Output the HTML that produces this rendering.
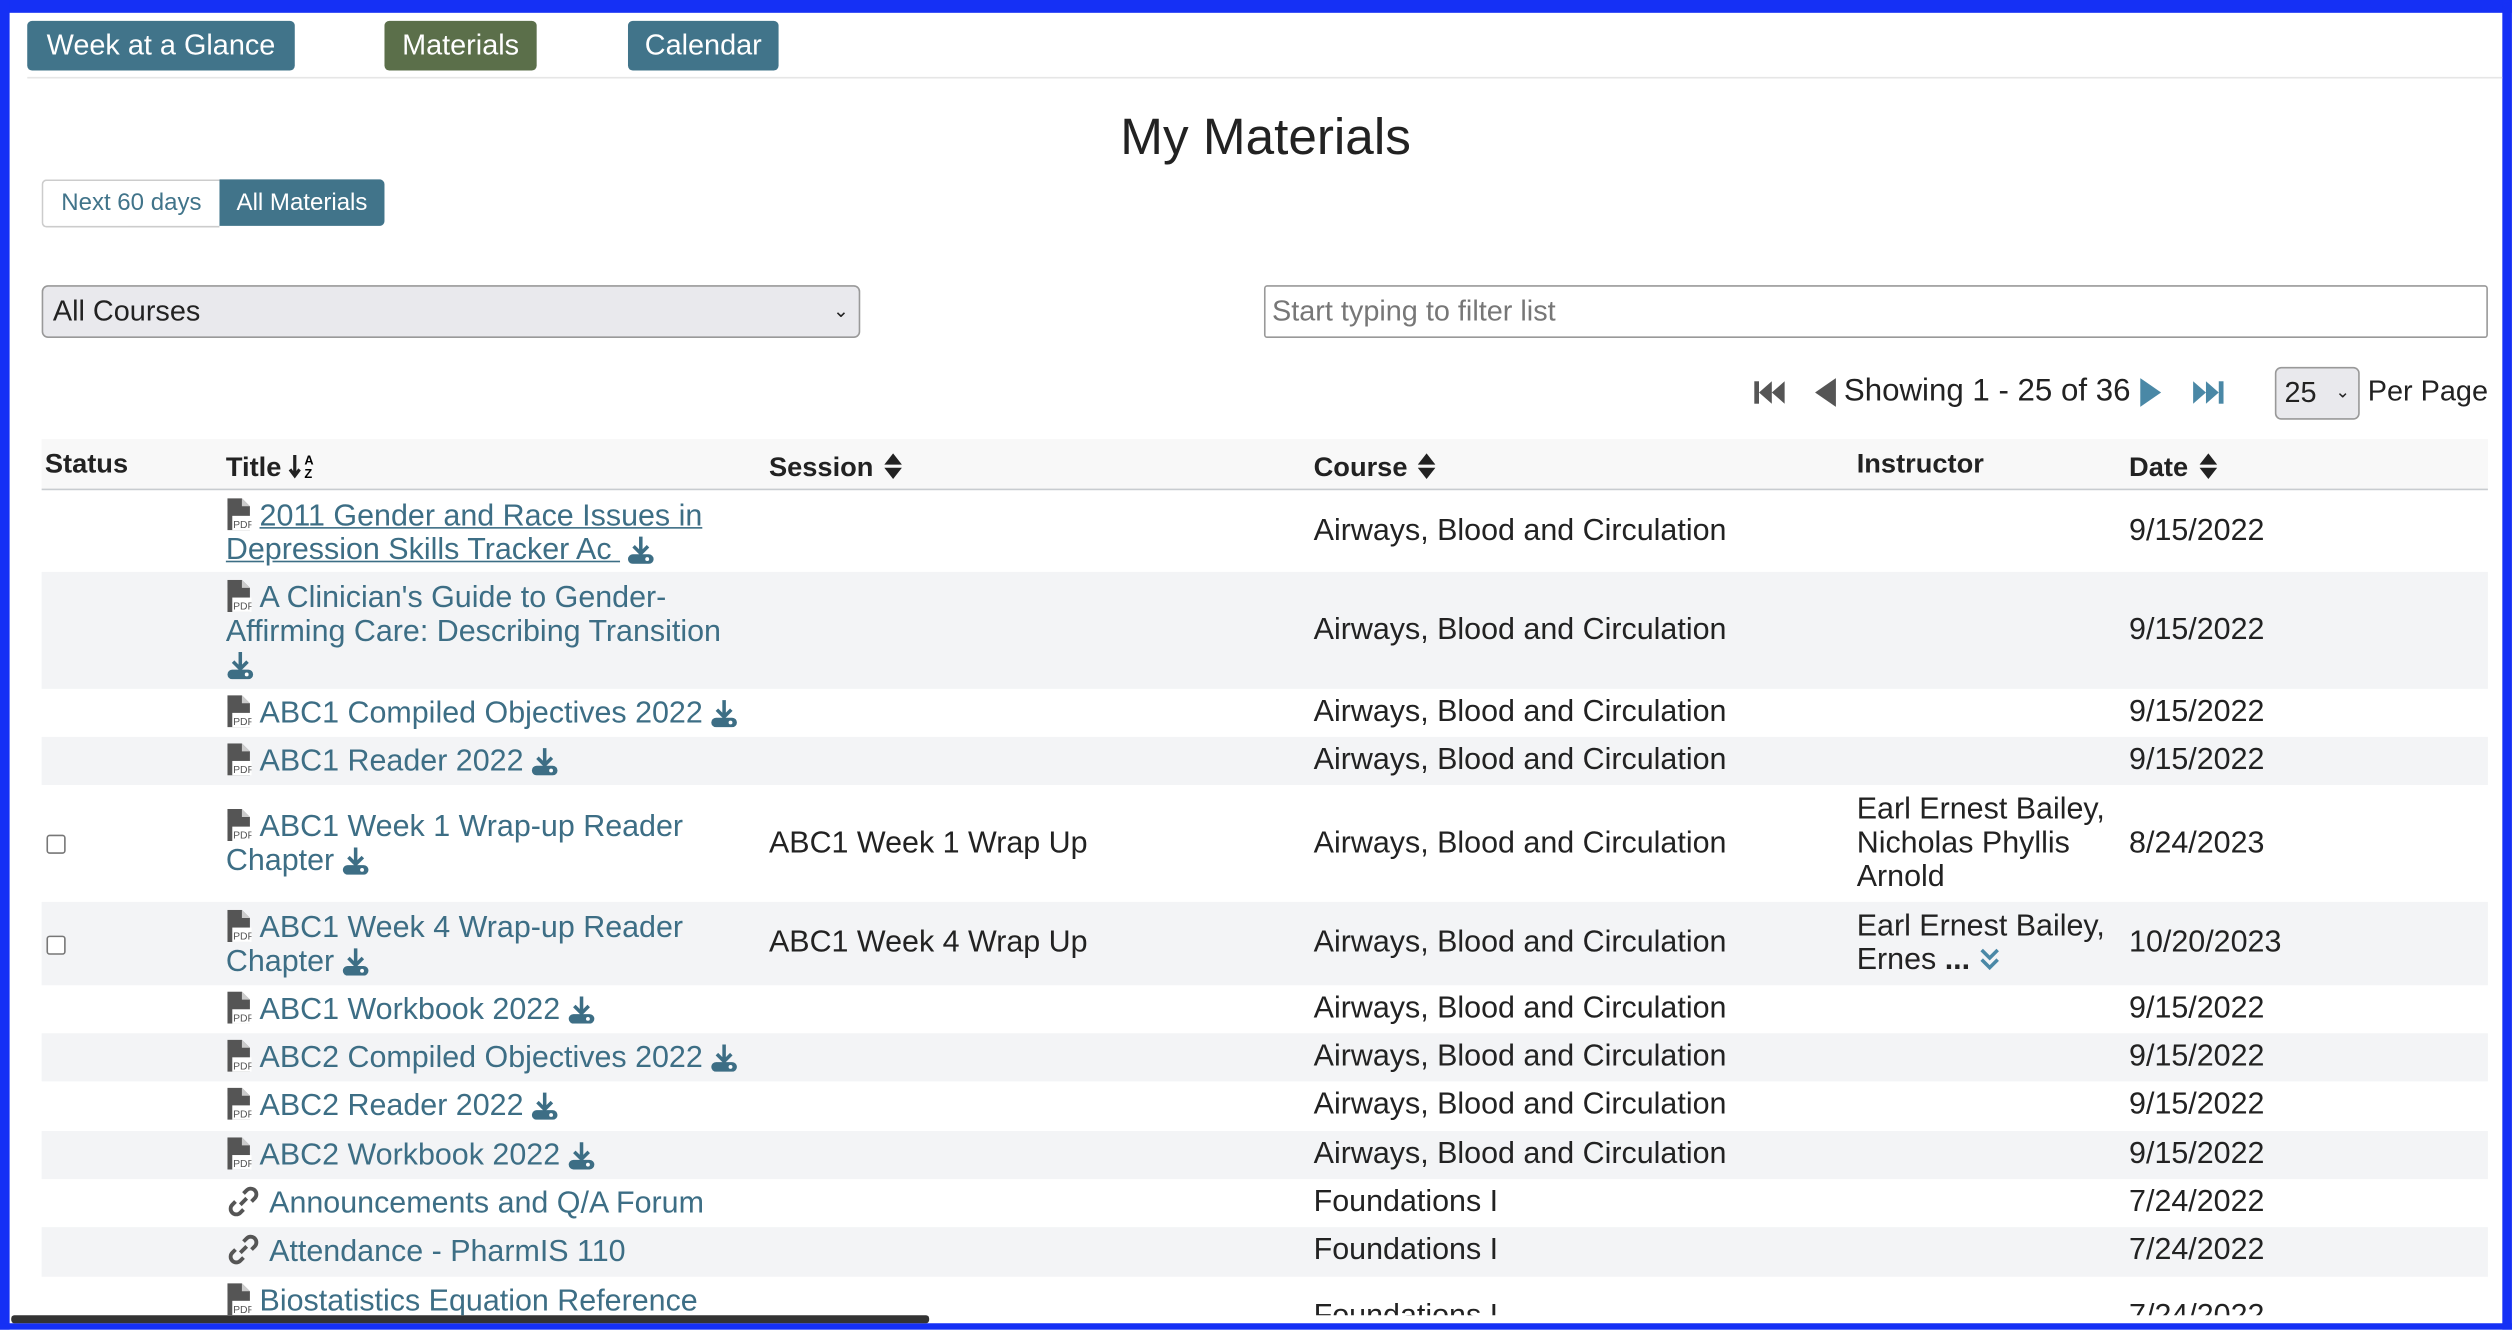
<!DOCTYPE html>
<html><head><meta charset="utf-8"><style>
html,body{margin:0;padding:0;width:2512px;height:1330px;overflow:hidden;background:#fff}
#w{position:absolute;left:0;top:0;width:1568px;height:830px;transform:scale(1.602);transform-origin:0 0;font-family:"Liberation Sans",sans-serif;color:#222;background:#fff}
.a{position:absolute}
.btn{position:absolute;top:13px;height:31px;border-radius:3px;color:#fff;font-size:18px;line-height:31px;text-align:center}
.c{color:#3d6e85}
.row{position:absolute;left:26px;width:1527px}
.sh{background:#f3f4f6}
.t{position:absolute;font-size:19px;line-height:21px;white-space:nowrap}
.pdf{display:inline-block;width:16px;height:20px;vertical-align:-3px;margin-right:5px}
.dl{display:inline-block;width:18px;height:18px;vertical-align:-3px;margin-left:4px}
.cb{position:absolute;left:3px;width:10px;height:10px;border:1.5px solid #777;border-radius:2px;background:#fff}
.hd{position:absolute;font-size:17px;font-weight:bold;top:8px}
.sort{display:inline-block;width:11px;height:16px;vertical-align:-2px;margin-left:2px}
</style></head><body><div id="w">
<svg width="0" height="0" style="position:absolute"><defs>
<symbol id="p" viewBox="0 0 16 20"><path d="M1 0h9l5 5v15H1z" fill="#555"/><path d="M10 0v5h5z" fill="#fff" opacity=".7"/><rect x="4" y="11" width="12" height="9" fill="#fff"/><text x="4.5" y="18.5" font-size="6.5" font-family="Liberation Sans" fill="#555">PDF</text></symbol>
<symbol id="d" viewBox="0 0 18 18"><path d="M9 1v10M4.5 7l4.5 4.5 4.5-4.5" stroke="#3d6e85" stroke-width="2.2" fill="none"/><rect x="1" y="12" width="16" height="6" rx="3" fill="#3d6e85"/><circle cx="13" cy="15" r="1.2" fill="#fff"/></symbol>
<symbol id="l" viewBox="0 0 20 20"><g fill="none" stroke="#555" stroke-width="2.4"><path d="M8 12l4-4"/><path d="M10 5l2-2a3.5 3.5 0 0 1 5 5l-2 2"/><path d="M10 15l-2 2a3.5 3.5 0 0 1-5-5l2-2"/></g></symbol>
<symbol id="s" viewBox="0 0 11 16"><path d="M5.5 0L11 7H0zM0 9h11l-5.5 7z" fill="#222"/></symbol>
</defs></svg>
<div class="a" style="left:0;top:0;width:1568px;height:8px;background:#1530f5"></div>
<div class="a" style="left:0;top:0;width:6px;height:830px;background:#1530f5"></div>
<div class="a" style="left:1562px;top:0;width:6px;height:830px;background:#1530f5"></div>
<div class="a" style="left:0;top:826px;width:1568px;height:4px;background:#1530f5"></div>
<div class="a" style="left:7px;top:821px;width:573px;height:5px;background:#333;border-radius:2px"></div>

<div class="btn" style="left:17px;width:167px;background:#41748a">Week at a Glance</div>
<div class="btn" style="left:240px;width:95px;background:#5b6f4a">Materials</div>
<div class="btn" style="left:392px;width:94px;background:#41748a">Calendar</div>
<div class="a" style="left:17px;top:48px;width:1545px;height:1px;background:#e6e6e6"></div>
<div class="a" style="left:0;width:1580px;top:66px;text-align:center;font-size:32px;line-height:38px">My Materials</div>

<div class="a" style="left:26px;top:112px;width:110px;height:28px;border:1px solid #ccc;border-right:none;border-radius:3px 0 0 3px;color:#41748a;font-size:15px;line-height:28px;text-align:center">Next 60 days</div>
<div class="a" style="left:137px;top:112px;width:103px;height:29px;background:#41748a;border-radius:0 3px 3px 0;color:#fff;font-size:15px;line-height:29px;text-align:center">All Materials</div>

<div class="a" style="left:26px;top:178px;width:509px;height:31px;background:#e9e9ed;border:1px solid #999;border-radius:4px;font-size:18px;line-height:31px"><span style="margin-left:6px">All Courses</span><span style="position:absolute;right:6px;top:0;font-size:12px">&#8964;</span></div>
<div class="a" style="left:789px;top:178px;width:762px;height:31px;border:1px solid #999;border-radius:2px;font-size:18px;line-height:31px;color:#777"><span style="margin-left:4px">Start typing to filter list</span></div>

<svg class="a" style="left:1095px;top:237px" width="20" height="16" viewBox="0 0 20 16"><rect x="0" y="1" width="3" height="14" fill="#555"/><path d="M11 1v14L3 8zM19 1v14L11 8z" fill="#555"/></svg>
<svg class="a" style="left:1131px;top:236px" width="16" height="18" viewBox="0 0 16 18"><path d="M15 0v18L2 9z" fill="#555"/></svg>
<div class="a t" style="left:1151px;top:234px;font-size:19.5px">Showing 1 - 25 of 36</div>
<svg class="a" style="left:1335px;top:236px" width="16" height="18" viewBox="0 0 16 18"><path d="M1 0v18l13-9z" fill="#4a88a6"/></svg>
<svg class="a" style="left:1368px;top:237px" width="20" height="16" viewBox="0 0 20 16"><path d="M1 1v14l8-7zM9 1v14l8-7z" fill="#4a88a6"/><rect x="17" y="1" width="3" height="14" fill="#4a88a6"/></svg>
<div class="a" style="left:1420px;top:229px;width:51px;height:31px;background:#e9e9ed;border:1px solid #999;border-radius:4px;font-size:18px;line-height:31px"><span style="margin-left:5px">25</span><span style="position:absolute;right:5px;font-size:11px">&#8964;</span></div>
<div class="a t" style="left:1478px;top:234px;font-size:18px">Per Page</div>

<div class="row" style="top:274px;height:31px;background:#f8f8f8;border-bottom:1px solid #c8ccd0">
<div class="hd" style="left:2px;top:6px">Status</div>
<div class="hd" style="left:115px">Title <svg width="20" height="16" style="vertical-align:-2px" viewBox="0 0 20 16"><path d="M4 1v13M1 10l3 4 3-4" stroke="#222" stroke-width="2" fill="none"/><text x="10" y="7" font-size="8" font-weight="bold" font-family="Liberation Sans">A</text><text x="10" y="15.5" font-size="8" font-weight="bold" font-family="Liberation Sans">Z</text></svg></div>
<div class="hd" style="left:454px">Session <svg class="sort"><use href="#s"/></svg></div>
<div class="hd" style="left:794px">Course <svg class="sort"><use href="#s"/></svg></div>
<div class="hd" style="left:1133px;top:6px">Instructor</div>
<div class="hd" style="left:1303px">Date <svg class="sort"><use href="#s"/></svg></div>
</div>

<div class="row" style="top:306px;height:51px"><div class="t c" style="left:115px;top:5px"><svg class="pdf"><use href="#p"/></svg><u>2011 Gender and Race Issues in</u><br><u>Depression Skills Tracker Ac </u><svg class="dl"><use href="#d"/></svg></div><div class="t" style="left:794px;top:15px">Airways, Blood and Circulation</div><div class="t" style="left:1303px;top:15px">9/15/2022</div></div>
<div class="row sh" style="top:357px;height:73px"><div class="t c" style="left:115px;top:5px"><svg class="pdf"><use href="#p"/></svg>A Clinician's Guide to Gender-<br>Affirming Care: Describing Transition<br><svg class="dl" style="margin-left:0"><use href="#d"/></svg></div><div class="t" style="left:794px;top:26px">Airways, Blood and Circulation</div><div class="t" style="left:1303px;top:26px">9/15/2022</div></div>
<div class="row" style="top:430px;height:30px"><div class="t c" style="left:115px;top:4px"><svg class="pdf"><use href="#p"/></svg>ABC1 Compiled Objectives 2022<svg class="dl"><use href="#d"/></svg></div><div class="t" style="left:794px;top:4px">Airways, Blood and Circulation</div><div class="t" style="left:1303px;top:4px">9/15/2022</div></div>
<div class="row sh" style="top:460px;height:30px"><div class="t c" style="left:115px;top:4px"><svg class="pdf"><use href="#p"/></svg>ABC1 Reader 2022<svg class="dl"><use href="#d"/></svg></div><div class="t" style="left:794px;top:4px">Airways, Blood and Circulation</div><div class="t" style="left:1303px;top:4px">9/15/2022</div></div>
<div class="row" style="top:490px;height:73px"><div class="cb" style="top:31px"></div><div class="t c" style="left:115px;top:15px"><svg class="pdf"><use href="#p"/></svg>ABC1 Week 1 Wrap-up Reader<br>Chapter<svg class="dl"><use href="#d"/></svg></div><div class="t" style="left:454px;top:26px">ABC1 Week 1 Wrap Up</div><div class="t" style="left:794px;top:26px">Airways, Blood and Circulation</div><div class="t" style="left:1133px;top:5px">Earl Ernest Bailey,<br>Nicholas Phyllis<br>Arnold</div><div class="t" style="left:1303px;top:26px">8/24/2023</div></div>
<div class="row sh" style="top:563px;height:52px"><div class="cb" style="top:21px"></div><div class="t c" style="left:115px;top:5px"><svg class="pdf"><use href="#p"/></svg>ABC1 Week 4 Wrap-up Reader<br>Chapter<svg class="dl"><use href="#d"/></svg></div><div class="t" style="left:454px;top:15px">ABC1 Week 4 Wrap Up</div><div class="t" style="left:794px;top:15px">Airways, Blood and Circulation</div><div class="t" style="left:1133px;top:5px">Earl Ernest Bailey,<br>Ernes <b>...</b> <svg width="14" height="16" style="vertical-align:-2px" viewBox="0 0 14 16"><path d="M2 2l5 5 5-5M2 8l5 5 5-5" stroke="#4a88a6" stroke-width="2.2" fill="none"/></svg></div><div class="t" style="left:1303px;top:15px">10/20/2023</div></div>
<div class="row" style="top:615px;height:30px"><div class="t c" style="left:115px;top:4px"><svg class="pdf"><use href="#p"/></svg>ABC1 Workbook 2022<svg class="dl"><use href="#d"/></svg></div><div class="t" style="left:794px;top:4px">Airways, Blood and Circulation</div><div class="t" style="left:1303px;top:4px">9/15/2022</div></div>
<div class="row sh" style="top:645px;height:30px"><div class="t c" style="left:115px;top:4px"><svg class="pdf"><use href="#p"/></svg>ABC2 Compiled Objectives 2022<svg class="dl"><use href="#d"/></svg></div><div class="t" style="left:794px;top:4px">Airways, Blood and Circulation</div><div class="t" style="left:1303px;top:4px">9/15/2022</div></div>
<div class="row" style="top:675px;height:31px"><div class="t c" style="left:115px;top:4px"><svg class="pdf"><use href="#p"/></svg>ABC2 Reader 2022<svg class="dl"><use href="#d"/></svg></div><div class="t" style="left:794px;top:4px">Airways, Blood and Circulation</div><div class="t" style="left:1303px;top:4px">9/15/2022</div></div>
<div class="row sh" style="top:706px;height:30px"><div class="t c" style="left:115px;top:4px"><svg class="pdf"><use href="#p"/></svg>ABC2 Workbook 2022<svg class="dl"><use href="#d"/></svg></div><div class="t" style="left:794px;top:4px">Airways, Blood and Circulation</div><div class="t" style="left:1303px;top:4px">9/15/2022</div></div>
<div class="row" style="top:736px;height:30px"><div class="t c" style="left:115px;top:4px"><svg class="pdf" style="width:22px"><use href="#l"/></svg>Announcements and Q/A Forum</div><div class="t" style="left:794px;top:4px">Foundations I</div><div class="t" style="left:1303px;top:4px">7/24/2022</div></div>
<div class="row sh" style="top:766px;height:31px"><div class="t c" style="left:115px;top:4px"><svg class="pdf" style="width:22px"><use href="#l"/></svg>Attendance - PharmIS 110</div><div class="t" style="left:794px;top:4px">Foundations I</div><div class="t" style="left:1303px;top:4px">7/24/2022</div></div>
<div class="row" style="top:797px;height:24px;overflow:hidden"><div class="t c" style="left:115px;top:4px"><svg class="pdf"><use href="#p"/></svg>Biostatistics Equation Reference</div><div class="t" style="left:794px;top:14px">Foundations I</div><div class="t" style="left:1303px;top:14px">7/24/2022</div></div>
</div></body></html>
